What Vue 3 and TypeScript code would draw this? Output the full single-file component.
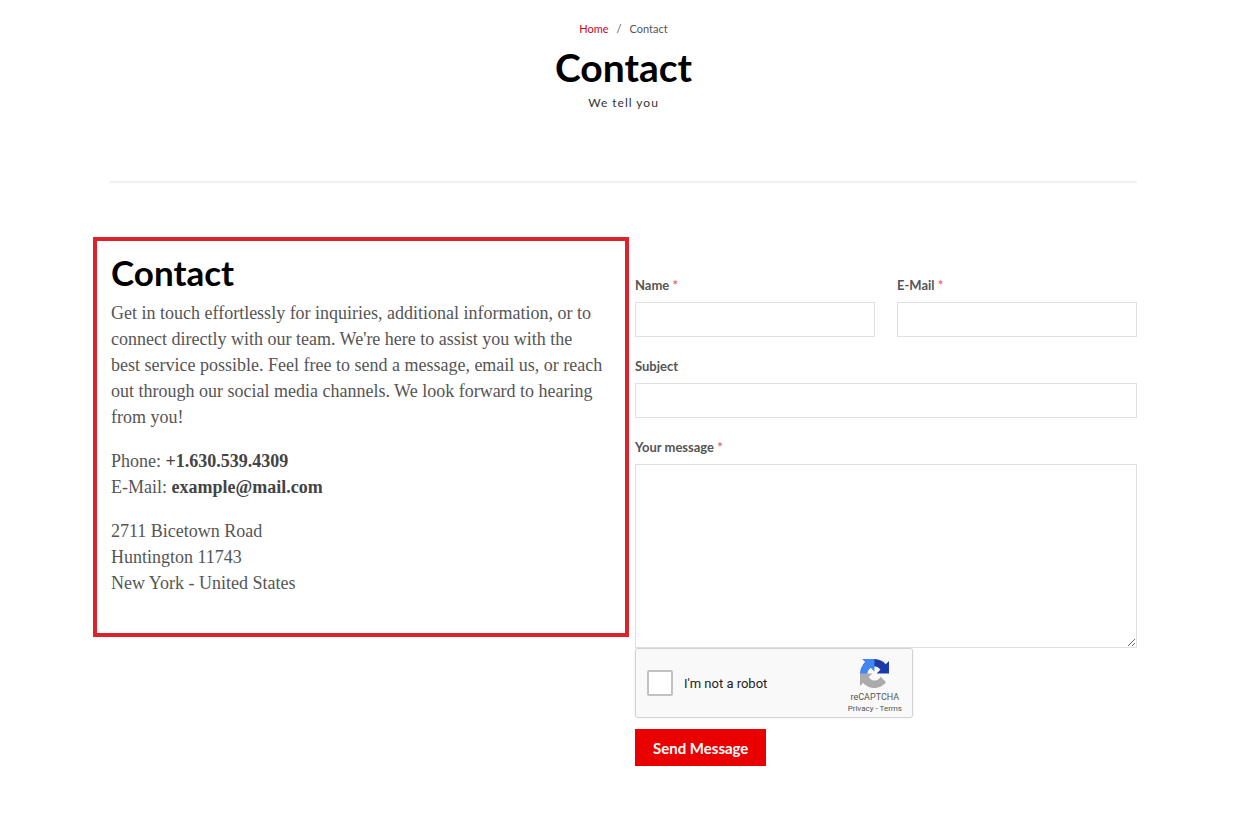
<script setup lang="ts">
import { reactive } from 'vue'

const form = reactive({ name: '', email: '', subject: '', message: '', human: false })
</script>

<template>
  <div class="page">
    <header class="page-header">
      <nav class="breadcrumb" aria-label="Breadcrumb">
        <a href="#">Home</a>
        <span class="divider">/</span>
        <span>Contact</span>
      </nav>
      <h1>Contact</h1>
      <p class="tagline">We tell you</p>
    </header>

    <main class="content">
      <section class="info">
        <h2>Contact</h2>
        <p>
          Get in touch effortlessly for inquiries, additional information, or to<br />
          connect directly with our team. We're here to assist you with the<br />
          best service possible. Feel free to send a message, email us, or reach<br />
          out through our social media channels. We look forward to hearing<br />
          from you!
        </p>
        <p>
          Phone: <strong>+1.630.539.4309</strong><br />
          E-Mail: <strong>example@mail.com</strong>
        </p>
        <p>
          2711 Bicetown Road<br />
          Huntington 11743<br />
          New York - United States
        </p>
      </section>

      <form class="contact-form" @submit.prevent>
        <div class="row">
          <div class="field">
            <label for="name">Name <span class="required">*</span></label>
            <input id="name" v-model="form.name" type="text" />
          </div>
          <div class="field">
            <label for="email">E-Mail <span class="required">*</span></label>
            <input id="email" v-model="form.email" type="email" />
          </div>
        </div>
        <div class="field">
          <label for="subject">Subject</label>
          <input id="subject" v-model="form.subject" type="text" />
        </div>
        <div class="field">
          <label for="message">Your message <span class="required">*</span></label>
          <textarea id="message" v-model="form.message"></textarea>
        </div>
        <div class="captcha">
          <input id="human" v-model="form.human" type="checkbox" />
          <label for="human">I'm not a robot</label>
          <div class="brand">
            <svg viewBox="0 0 64 64" aria-hidden="true">
              <path fill="#1c3aa9" d="M64 31.955l-.033-1.37V4.687l-7.16 7.16C50.948 4.674 42.033.093 32.05.093c-10.4 0-19.622 4.96-25.458 12.64l11.736 11.86a15.55 15.55 0 0 1 4.754-5.334c2.05-1.6 4.952-2.906 8.968-2.906.485 0 .86.057 1.135.163 4.976.393 9.288 3.14 11.828 7.124l-8.307 8.307L64 31.953" />
              <path fill="#4285f4" d="M31.862.094l-1.37.033H4.594l7.16 7.16C4.58 13.147 0 22.06 0 32.046c0 10.4 4.96 19.622 12.64 25.458L24.5 45.768a15.55 15.55 0 0 1-5.334-4.754c-1.6-2.05-2.906-4.952-2.906-8.968 0-.485.057-.86.163-1.135.393-4.976 3.14-9.288 7.124-11.828l8.307 8.307L31.86.095" />
              <path fill="#ababab" d="M.001 32.045l.033 1.37v25.898l7.16-7.16c5.86 7.173 14.774 11.754 24.76 11.754 10.4 0 19.622-4.96 25.458-12.64l-11.736-11.86a15.55 15.55 0 0 1-4.754 5.334c-2.05 1.6-4.952 2.906-8.968 2.906-.485 0-.86-.057-1.135-.163-4.976-.393-9.288-3.14-11.828-7.124l8.307-8.307c-10.522.04-22.4.066-27.295-.005" />
            </svg>
            <span class="brand-name">reCAPTCHA</span>
            <span class="legal"><a href="#">Privacy</a> - <a href="#">Terms</a></span>
          </div>
        </div>
        <button type="submit">Send Message</button>
      </form>
    </main>
  </div>
</template>

<style>
body {
  margin: 0;
  background: #fff;
}
</style>

<style scoped>
.page {
  box-sizing: border-box;
  padding: 20px 97px 55px 93px;
  font-family: Lato, sans-serif;
  color: #555;
}

a {
  color: inherit;
  text-decoration: none;
}

.page-header {
  display: flex;
  flex-direction: column;
  align-items: center;
  margin-left: 17px;
  padding-bottom: 71px;
  border-bottom: 2px solid #f0f0f0;
}

.breadcrumb {
  display: flex;
  gap: 8px;
  font-size: 11px;
  line-height: 18px;
}

.breadcrumb a {
  color: #d0021b;
}

h1,
h2 {
  margin: 0;
  font-weight: 700;
  color: #000;
}

h1 {
  font-size: 39px;
  line-height: 58px;
}

.tagline {
  margin: 0;
  font-size: 12px;
  line-height: 14px;
  letter-spacing: 1px;
  color: #333;
}

.content {
  display: grid;
  grid-template-columns: 536fr 502fr;
  column-gap: 6px;
  align-items: start;
  margin-top: 54px;
}

.info {
  box-sizing: border-box;
  padding: 11px 0 19px 14px;
  border: 4px solid #dc232d;
  font-family: "Liberation Serif", serif;
  font-size: 18px;
  line-height: 26px;
  white-space: nowrap;
}

.info h2 {
  margin-bottom: 8px;
  font-family: Lato, sans-serif;
  font-size: 35px;
  line-height: 40px;
}

.info p {
  margin: 0 0 18px;
}

.info strong {
  color: #444;
}

.contact-form {
  padding-top: 38px;
}

.row {
  display: grid;
  grid-template-columns: 1fr 1fr;
  column-gap: 22px;
}

.field {
  display: flex;
  flex-direction: column;
}

.field label {
  margin-bottom: 7px;
  font-size: 13px;
  font-weight: 700;
  line-height: 20px;
}

.required {
  color: #e8696d;
}

.field input,
.field textarea {
  box-sizing: border-box;
  width: 100%;
  margin: 0 0 19px;
  padding: 6px 10px;
  border: 1px solid #e1e1e1;
  border-radius: 0;
  background: #fff;
  font: 14px/20px Lato, sans-serif;
  color: #555;
}

.field input {
  height: 35px;
}

.field textarea {
  height: 184px;
  margin: 0;
  resize: vertical;
}

.captcha {
  box-sizing: border-box;
  display: flex;
  align-items: center;
  width: 278px;
  height: 70px;
  padding: 0 10px 0 11px;
  border: 1px solid #d3d3d3;
  border-radius: 3px;
  background: #f9f9f9;
  box-shadow: 0 0 3px rgba(0, 0, 0, 0.08);
  font-family: Roboto, sans-serif;
}

.captcha input {
  appearance: none;
  box-sizing: border-box;
  width: 26px;
  height: 26px;
  margin: 0 11px 0 0;
  border: 2px solid #c1c1c1;
  border-radius: 2px;
  background: #fff;
}

.captcha label {
  font-size: 13px;
  color: #222;
}

.brand {
  display: flex;
  flex-direction: column;
  align-items: center;
  margin-left: auto;
  padding-top: 8px;
  color: #555;
}

.brand svg {
  width: 29px;
  height: 29px;
}

.brand-name {
  margin-top: 3px;
  font-size: 9px;
  line-height: 12px;
}

.legal {
  font-size: 8px;
  line-height: 12px;
}

button {
  display: block;
  height: 37px;
  margin-top: 11px;
  padding: 0 18px;
  border: 0;
  background: #eb0000;
  font: 700 15px/20px Lato, sans-serif;
  color: #fff;
}
</style>
